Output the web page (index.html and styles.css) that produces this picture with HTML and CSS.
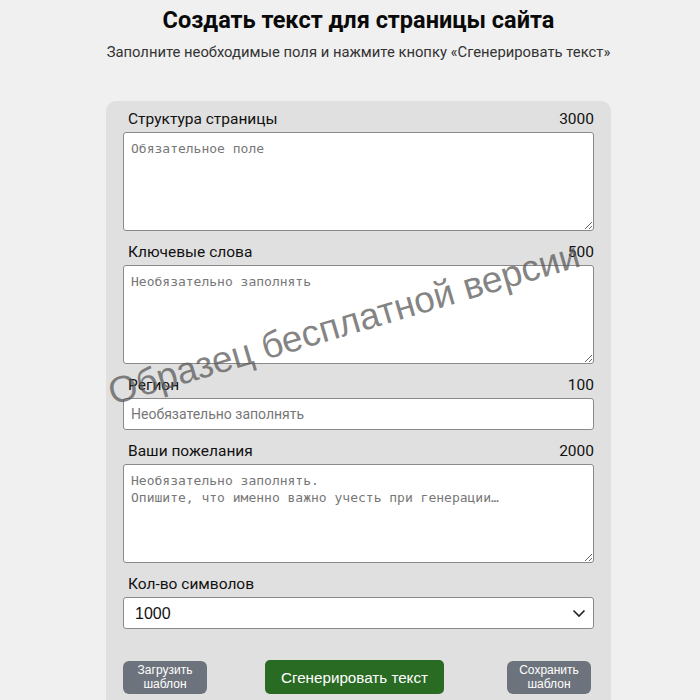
FILE: index.html
```html
<!DOCTYPE html>
<html lang="ru">
<head>
<meta charset="utf-8">
<title>Создать текст для страницы сайта</title>
<link rel="stylesheet" href="styles.css">
</head>
<body>
<div class="page">
  <h1 class="title">Создать текст для страницы сайта</h1>
  <p class="subtitle">Заполните необходимые поля и нажмите кнопку «Сгенерировать текст»</p>
  <form class="card">
    <div class="field">
      <div class="label-row"><span>Структура страницы</span><span>3000</span></div>
      <textarea class="area" placeholder="Обязательное поле"></textarea>
    </div>
    <div class="field">
      <div class="label-row"><span>Ключевые слова</span><span>500</span></div>
      <textarea class="area" placeholder="Необязательно заполнять"></textarea>
    </div>
    <div class="field">
      <div class="label-row"><span>Регион</span><span>100</span></div>
      <input class="input" type="text" placeholder="Необязательно заполнять">
    </div>
    <div class="field">
      <div class="label-row"><span>Ваши пожелания</span><span>2000</span></div>
      <textarea class="area" placeholder="Необязательно заполнять.&#10;Опишите, что именно важно учесть при генерации…"></textarea>
    </div>
    <div class="field">
      <div class="label-row"><span>Кол-во символов</span></div>
      <div class="select-wrap">
        <select class="select">
          <option>1000</option>
          <option>2000</option>
          <option>3000</option>
        </select>
        <svg class="chevron" width="14" height="9" viewBox="0 0 14 9"><path d="M1.5 1.5 L7 7 L12.5 1.5" fill="none" stroke="#222" stroke-width="1.6"/></svg>
      </div>
    </div>
    <div class="actions">
      <button type="button" class="btn btn-gray">Загрузить<br>шаблон</button>
      <button type="button" class="btn btn-green">Сгенерировать текст</button>
      <button type="button" class="btn btn-gray">Сохранить<br>шаблон</button>
    </div>
    <div class="watermark">Образец бесплатной версии</div>
  </form>
</div>
</body>
</html>
```

FILE: styles.css
```css
html, body {
  margin: 0;
  padding: 0;
  background: #f0f0f0;
}
body {
  font-family: Roboto, "Liberation Sans", Arial, sans-serif;
  color: #111;
}
.page {
  width: 505px;
  margin: 0 auto;
  padding-left: 17px;
}
.title {
  margin: 0;
  padding-top: 6px;
  font-size: 23.5px;
  line-height: 28px;
  font-weight: 700;
  text-align: center;
  color: #0a0a0a;
}
.subtitle {
  margin: 8px 0 0;
  font-size: 14.8px;
  line-height: 20px;
  text-align: center;
  color: #333;
  white-space: nowrap;
}
.card {
  position: relative;
  margin-top: 39px;
  background: #e0e0e0;
  border-radius: 10px;
  padding: 8px 17px 24px;
}
.field {
  margin-bottom: 11px;
}
.label-row {
  display: flex;
  justify-content: space-between;
  padding-left: 5px;
  font-size: 15.5px;
  line-height: 20px;
  margin-bottom: 3px;
  color: #111;
}
.area, .input, .select {
  display: block;
  box-sizing: border-box;
  width: 100%;
  margin: 0;
  background: #fff;
  border: 1px solid #8a8a8a;
  border-radius: 3px;
}
.area {
  height: 99px;
  padding: 7px 7px;
  font-family: "DejaVu Sans Mono", monospace;
  font-size: 13px;
  line-height: 17px;
  resize: vertical;
}
.area::placeholder {
  color: #777;
}
.input {
  height: 32px;
  padding: 0 7px;
  font-family: Roboto, "Liberation Sans", sans-serif;
  font-size: 14px;
}
.input::placeholder {
  color: #777;
}
.select-wrap {
  position: relative;
}
.select {
  height: 32px;
  padding: 0 11px;
  appearance: none;
  -webkit-appearance: none;
  font-family: "Liberation Sans", Arial, sans-serif;
  font-size: 16px;
  color: #111;
}
.chevron {
  position: absolute;
  right: 8px;
  top: 12px;
  pointer-events: none;
}
.actions {
  display: flex;
  justify-content: space-between;
  align-items: center;
  margin-top: 31px;
  padding-right: 3px;
}
.btn {
  border: 0;
  color: #fff;
  font-family: "Liberation Sans", Arial, sans-serif;
  cursor: pointer;
}
.btn-gray {
  width: 84px;
  height: 33px;
  padding: 0;
  border-radius: 6px;
  background: #6d737c;
  font-size: 12px;
  line-height: 14px;
}
.btn-green {
  width: 179px;
  height: 34px;
  border-radius: 5px;
  background: #2a6b24;
  font-size: 15.2px;
  margin-right: 5px;
}
.watermark {
  position: absolute;
  left: 238px;
  top: 223px;
  transform: translate(-50%, -50%) rotate(-16.5deg);
  font-family: "Liberation Sans", Arial, sans-serif;
  font-size: 37px;
  white-space: nowrap;
  color: rgba(85, 85, 85, 0.72);
  pointer-events: none;
}
```
